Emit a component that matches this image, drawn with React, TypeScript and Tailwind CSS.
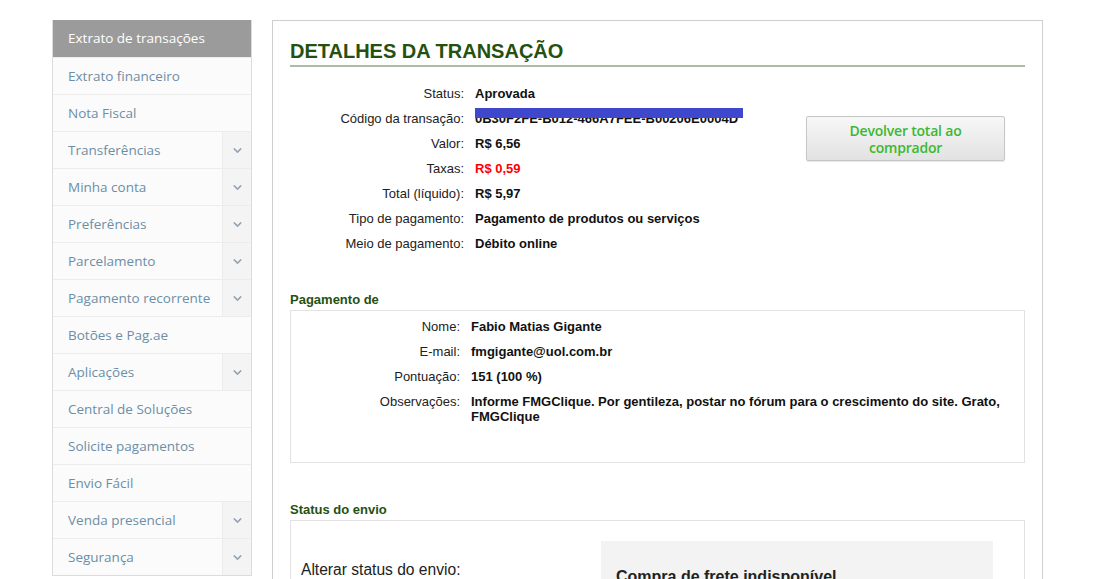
import { ChevronDown } from "lucide-react"

const menu = [
  { label: "Extrato de transações", active: true },
  { label: "Extrato financeiro" },
  { label: "Nota Fiscal" },
  { label: "Transferências", sub: true },
  { label: "Minha conta", sub: true },
  { label: "Preferências", sub: true },
  { label: "Parcelamento", sub: true },
  { label: "Pagamento recorrente", sub: true },
  { label: "Botões e Pag.ae" },
  { label: "Aplicações", sub: true },
  { label: "Central de Soluções" },
  { label: "Solicite pagamentos" },
  { label: "Envio Fácil" },
  { label: "Venda presencial", sub: true },
  { label: "Segurança", sub: true },
]

const detalhes = [
  { label: "Status:", value: "Aprovada" },
  { label: "Código da transação:", value: "0B30F2FE-B012-466A7FEE-B00206E0004D", masked: true },
  { label: "Valor:", value: "R$ 6,56" },
  { label: "Taxas:", value: "R$ 0,59", red: true },
  { label: "Total (líquido):", value: "R$ 5,97" },
  { label: "Tipo de pagamento:", value: "Pagamento de produtos ou serviços" },
  { label: "Meio de pagamento:", value: "Débito online" },
]

const pagador = [
  { label: "Nome:", value: "Fabio Matias Gigante" },
  { label: "E-mail:", value: "fmgigante@uol.com.br" },
  { label: "Pontuação:", value: "151 (100 %)" },
  {
    label: "Observações:",
    value: "Informe FMGClique. Por gentileza, postar no fórum para o crescimento do site. Grato, FMGClique",
  },
]

function Sidebar() {
  return (
    <nav className="w-[200px] shrink-0 self-start border border-t-0 border-[#dcdcdc] bg-[#fbfbfb] font-['Open_Sans',sans-serif] text-[13.5px]">
      {menu.map((item, i) => (
        <div
          key={i}
          className={
            item.active
              ? "flex h-[37px] items-center bg-[#9b9b9b] pl-[15px] text-white"
              : "flex h-[37px] items-stretch border-t border-[#ececec] text-[#6c8ea6]"
          }
        >
          {item.active ? (
            <span>{item.label}</span>
          ) : (
            <>
              <span className="flex flex-1 items-center pl-[15px]">{item.label}</span>
              {item.sub && (
                <span className="flex w-[29px] items-center justify-center border-l border-[#ececec] bg-[#f4f4f4]">
                  <ChevronDown size={13} strokeWidth={2.75} className="text-[#95a3b0]" />
                </span>
              )}
            </>
          )}
        </div>
      ))}
    </nav>
  )
}

export default function App() {
  return (
    <div className="flex min-h-[579px] gap-[20px] bg-white pl-[52px] pt-[20px] font-['Liberation_Sans',Arial,sans-serif] text-[13px] text-[#111]">
      <Sidebar />

      <main className="w-[771px] shrink-0 border border-[#cfcfcf] px-[17px] pt-[18px]">
        <h1 className="border-b-2 border-[#a9bea2] pb-[2px] text-[20px] font-bold leading-[24px] text-[#24510f]">
          DETALHES DA TRANSAÇÃO
        </h1>

        <div className="flex pt-[14px]">
          <div className="flex-1">
            {detalhes.map((row) => (
              <div key={row.label} className="flex h-[25px] items-center">
                <span className="w-[185px] shrink-0 pr-[11px] text-right text-[#222]">{row.label}</span>
                <span className={row.red ? "font-bold text-[#ff0000]" : "relative font-bold"}>
                  {row.value}
                  {row.masked && (
                    <span className="absolute left-0 top-[-1px] h-[10px] w-[268px] bg-[#3f47cc]" />
                  )}
                </span>
              </div>
            ))}
          </div>
          <div className="pr-[20px] pt-[35px]">
            <button className="flex h-[45px] w-[199px] flex-col items-center justify-center rounded-[2px] border border-[#c6c6c6] bg-gradient-to-b from-[#f7f7f7] to-[#e2e2e2] font-['Open_Sans',sans-serif] text-[14px] font-semibold leading-[17px] tracking-[-0.2px] text-[#3cb82f] shadow-[0_1px_1px_rgba(0,0,0,0.1)]">
              <span>Devolver total ao</span>
              <span>comprador</span>
            </button>
          </div>
        </div>

        <h2 className="mt-[36px] text-[13px] font-bold leading-[16px] text-[#24510f]">Pagamento de</h2>
        <div className="mt-[2px] h-[153px] border border-[#e2e2e2] pt-[3px]">
          {pagador.map((row) => (
            <div key={row.label} className="flex py-[5px] leading-[15px]">
              <span className="w-[180px] shrink-0 pr-[11px] text-right text-[#222]">{row.label}</span>
              <span className="pr-[16px] font-bold">{row.value}</span>
            </div>
          ))}
        </div>

        <h2 className="mt-[39px] text-[13px] font-bold leading-[16px] text-[#24510f]">Status do envio</h2>
        <div className="mt-[2px] flex h-[80px] gap-[60px] border border-[#e2e2e2] pl-[10px] pt-[20px]">
          <span className="pt-[17px] text-[15.6px] text-[#222]">Alterar status do envio:</span>
          <div className="ml-auto mr-[31px] w-[392px] bg-[#f3f3f3] px-[15px] pt-[24px]">
            <span className="text-[16px] font-bold text-[#222]">Compra de frete indisponível</span>
          </div>
        </div>
      </main>
    </div>
  )
}
